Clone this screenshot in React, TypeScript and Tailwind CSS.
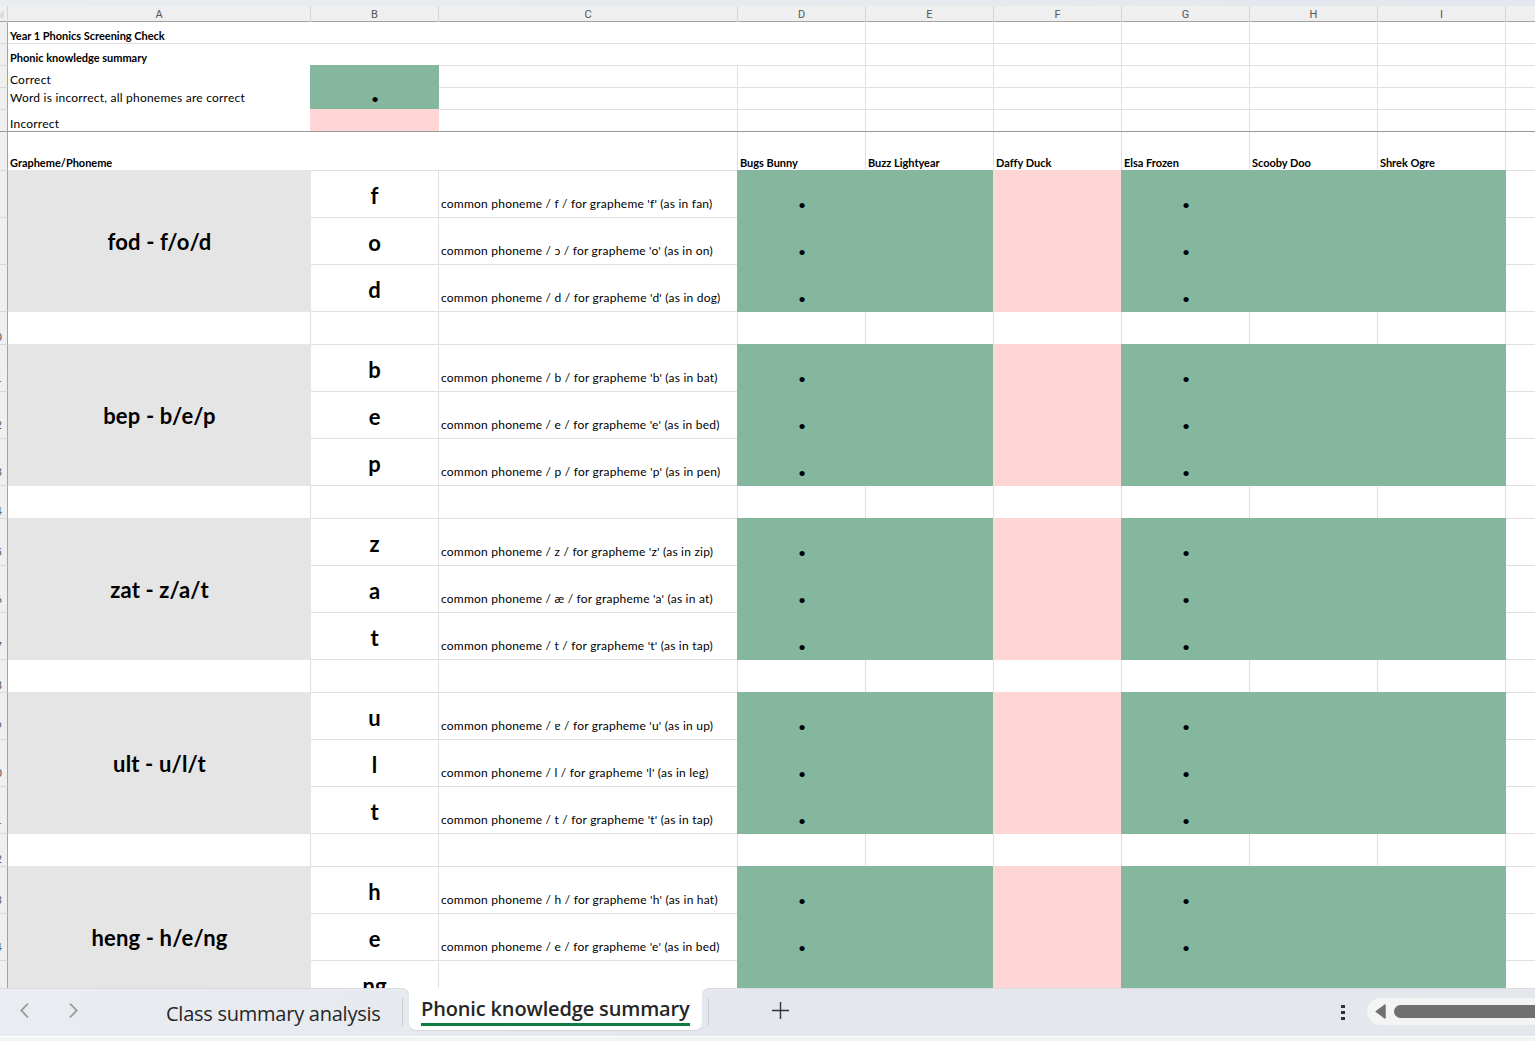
import clsx from 'clsx'
import type { ReactNode } from 'react'

type Mark = 'ok' | 'dot' | 'no'

interface Phoneme {
  row: string
  grapheme: string
  text: string
}

interface Word {
  label: string
  gapRow: string
  phonemes: Phoneme[]
}

const COLS = 'grid grid-cols-[8px_303px_128px_299px_repeat(6,128px)_29px]'

const LETTERS = ['A', 'B', 'C', 'D', 'E', 'F', 'G', 'H', 'I', '']

const PUPILS: { name: string; mark: Mark }[] = [
  { name: 'Bugs Bunny', mark: 'dot' },
  { name: 'Buzz Lightyear', mark: 'ok' },
  { name: 'Daffy Duck', mark: 'no' },
  { name: 'Elsa Frozen', mark: 'dot' },
  { name: 'Scooby Doo', mark: 'ok' },
  { name: 'Shrek Ogre', mark: 'ok' },
]

const WORDS: Word[] = [
  {
    label: 'fod - f/o/d',
    gapRow: '10',
    phonemes: [
      { row: '', grapheme: 'f', text: "common phoneme / f / for grapheme 'f' (as in fan)" },
      { row: '', grapheme: 'o', text: "common phoneme / ɔ / for grapheme 'o' (as in on)" },
      { row: '', grapheme: 'd', text: "common phoneme / d / for grapheme 'd' (as in dog)" },
    ],
  },
  {
    label: 'bep - b/e/p',
    gapRow: '14',
    phonemes: [
      { row: '11', grapheme: 'b', text: "common phoneme / b / for grapheme 'b' (as in bat)" },
      { row: '12', grapheme: 'e', text: "common phoneme / e / for grapheme 'e' (as in bed)" },
      { row: '13', grapheme: 'p', text: "common phoneme / p / for grapheme 'p' (as in pen)" },
    ],
  },
  {
    label: 'zat - z/a/t',
    gapRow: '18',
    phonemes: [
      { row: '15', grapheme: 'z', text: "common phoneme / z / for grapheme 'z' (as in zip)" },
      { row: '16', grapheme: 'a', text: "common phoneme / æ / for grapheme 'a' (as in at)" },
      { row: '17', grapheme: 't', text: "common phoneme / t / for grapheme 't' (as in tap)" },
    ],
  },
  {
    label: 'ult - u/l/t',
    gapRow: '22',
    phonemes: [
      { row: '19', grapheme: 'u', text: "common phoneme / ɐ / for grapheme 'u' (as in up)" },
      { row: '20', grapheme: 'l', text: "common phoneme / l / for grapheme 'l' (as in leg)" },
      { row: '21', grapheme: 't', text: "common phoneme / t / for grapheme 't' (as in tap)" },
    ],
  },
  {
    label: 'heng - h/e/ng',
    gapRow: '',
    phonemes: [
      { row: '23', grapheme: 'h', text: "common phoneme / h / for grapheme 'h' (as in hat)" },
      { row: '24', grapheme: 'e', text: "common phoneme / e / for grapheme 'e' (as in bed)" },
      { row: '', grapheme: 'ng', text: '' },
    ],
  },
]

function Cell({ className, children }: { className?: string; children?: ReactNode }) {
  return (
    <div className={clsx('min-w-0 border-r border-b border-[#e0e0e0] last:border-r-0', className)}>{children}</div>
  )
}

function Gutter({ n = '', className }: { n?: string; className?: string }) {
  return (
    <div
      className={clsx(
        'flex items-end justify-end overflow-hidden border-r border-r-[#a3a3a3] border-b border-b-[#d9d9d9] bg-[#efefef] pr-[5px] text-[11px] leading-[14px] text-[#555]',
        className,
      )}
    >
      {n}
    </div>
  )
}

function Small({ children }: { children: ReactNode }) {
  return <span className="text-[12px] leading-[16px] tracking-[0.22px] whitespace-nowrap">{children}</span>
}

function Bold({ children }: { children: ReactNode }) {
  return <span className="text-[11px] leading-[14px] font-bold tracking-[-0.02px] whitespace-nowrap">{children}</span>
}

function Dot() {
  return <span className="text-[14px] leading-[14px]">•</span>
}

// Fills cover the grid line above and to the left of the cell
function MarkCell({ mark }: { mark: Mark }) {
  return (
    <div
      className={clsx(
        '-mt-px -ml-px flex items-end justify-center pb-[6px] pl-px',
        mark === 'no' ? 'bg-[#ffd6d6]' : 'bg-[#84b79e]',
      )}
    >
      {mark === 'dot' && <Dot />}
    </div>
  )
}

function EmptyCells({ count }: { count: number }) {
  return (
    <>
      {Array.from({ length: count }, (_, i) => (
        <Cell key={i} />
      ))}
    </>
  )
}

function ColumnHeader() {
  return (
    <div className={clsx(COLS, 'h-4 border-b border-[#a3a3a3] bg-[#efefef]')}>
      <div className="flex items-center border-r border-[#d4d4d4]">
        <svg width="4" height="8" viewBox="0 0 4 8">
          <path d="M4 0V8H0V4Z" fill="#dcdcdc" />
        </svg>
      </div>
      {LETTERS.map((l, i) => (
        <div
          key={i}
          className="flex justify-center border-r border-[#d4d4d4] pt-px font-['Roboto',sans-serif] text-[11px] leading-[15px] text-[#555] last:border-r-0"
        >
          {l}
        </div>
      ))}
    </div>
  )
}

function TopRows() {
  return (
    <>
      <div className={clsx(COLS, 'h-[22px]')}>
        <Gutter />
        <Cell className="col-span-4 flex items-end pl-[2px]">
          <Bold>Year 1 Phonics Screening Check</Bold>
        </Cell>
        <EmptyCells count={6} />
      </div>
      <div className={clsx(COLS, 'h-[22px]')}>
        <Gutter />
        <Cell className="flex items-end border-r-transparent border-b-transparent pl-[2px]">
          <Bold>Phonic knowledge summary</Bold>
        </Cell>
        <Cell className="col-span-3" />
        <EmptyCells count={6} />
      </div>
      <div className={clsx(COLS, 'h-[22px]')}>
        <Gutter />
        <div className="flex items-end pl-[2px]">
          <Small>Correct</Small>
        </div>
        <div className="-mt-px -ml-px bg-[#84b79e]" />
        <EmptyCells count={8} />
      </div>
      <div className={clsx(COLS, 'h-[22px]')}>
        <Gutter />
        <div className="flex items-start pl-[2px] pt-[2px]">
          <Small>Word is incorrect, all phonemes are correct</Small>
        </div>
        <div className="-mt-px -ml-px flex items-end justify-center bg-[#84b79e] pb-1 pl-px">
          <Dot />
        </div>
        <EmptyCells count={8} />
      </div>
      <div className={clsx(COLS, 'h-[22px] grid-rows-[21px] border-b border-[#999]')}>
        <Gutter className="border-b-0" />
        <div className="flex items-start pt-[6px] pl-[2px]">
          <Small>Incorrect</Small>
        </div>
        <div className="-mt-px -ml-px bg-[#ffd6d6]" />
        {Array.from({ length: 8 }, (_, i) => (
          <Cell key={i} className="border-b-0" />
        ))}
      </div>
      <div className={clsx(COLS, 'h-[39px]')}>
        <Gutter />
        <Cell className="col-span-3 flex items-end pl-[2px]">
          <Bold>Grapheme/Phoneme</Bold>
        </Cell>
        {PUPILS.map(p => (
          <Cell key={p.name} className="flex items-end pl-[2px]">
            <Bold>{p.name}</Bold>
          </Cell>
        ))}
        <Cell />
      </div>
    </>
  )
}

function PhonemeCells({ p }: { p: Phoneme }) {
  return (
    <>
      <Cell className="flex items-center justify-center pt-[4px] text-[22px] leading-[26px] font-bold">
        {p.grapheme}
      </Cell>
      <Cell className="flex items-end pb-[5px] pl-[2px]">
        <Small>{p.text}</Small>
      </Cell>
      {PUPILS.map(pupil => (
        <MarkCell key={pupil.name} mark={pupil.mark} />
      ))}
      <Cell />
    </>
  )
}

function WordBlock({ word }: { word: Word }) {
  return (
    <>
      <div className={clsx(COLS, 'grid-rows-[47px_47px_47px]')}>
        {word.phonemes.map((p, i) => (
          <div key={i} className="contents">
            <Gutter n={p.row} className="col-start-1 pb-[6px]" />
            {i === 0 && (
              <div className="row-span-3 -mt-px flex items-center justify-center bg-[#e5e5e5] pt-[2px] text-[22px] leading-[26px] font-bold tracking-[0.15px]">
                {word.label}
              </div>
            )}
            <PhonemeCells p={p} />
          </div>
        ))}
      </div>
      <div className={clsx(COLS, 'h-[33px]')}>
        <Gutter n={word.gapRow} />
        <EmptyCells count={10} />
      </div>
    </>
  )
}

function SheetTabs() {
  return (
    <div className="h-[53px] shrink-0 bg-[#f3f3f3] font-['Open_Sans',sans-serif] text-[#262626]">
      <div className="flex h-12 bg-linear-to-r from-[#e9edf1] via-[#e4e7ee] to-[#e4e7ec]">
        <div className="relative flex w-[409px] border-t border-[#dcdcdc]">
          <div className="flex w-[166px] gap-10 pt-[14px] pl-5 text-[#999]">
            <svg width="9" height="15" viewBox="0 0 9 15" fill="none" stroke="currentColor" strokeWidth="1.8">
              <path d="M8 0.7L1.2 7.5L8 14.3" />
            </svg>
            <svg width="9" height="15" viewBox="0 0 9 15" fill="none" stroke="currentColor" strokeWidth="1.8">
              <path d="M1 0.7L7.8 7.5L1 14.3" />
            </svg>
          </div>
          <span className="w-[236px] pt-[11px] text-[20px] leading-[28px] tracking-[-0.25px] whitespace-nowrap">
            Class summary analysis
          </span>
          <div className="mt-[9px] h-7 w-px bg-[#cfcfcf]" />
          <div className="absolute -top-px right-0 size-[7px] bg-white">
            <div className="size-full rounded-tr-[7px] border-t border-r border-[#dcdcdc] bg-[#e6eaef]" />
          </div>
        </div>
        <div className="flex h-[42px] w-[293px] justify-center rounded-b-[7px] bg-white shadow-[0_1px_1px_#d5d7db]">
          <span className="mt-[6px] h-8 w-[269px] border-b-3 border-[#107c41] pt-px text-[20px] leading-[28px] font-semibold tracking-[-0.15px] whitespace-nowrap">
            Phonic knowledge summary
          </span>
        </div>
        <div className="relative flex flex-1 border-t border-[#dcdcdc]">
          <div className="absolute -top-px left-0 size-[7px] bg-white">
            <div className="size-full rounded-tl-[7px] border-t border-l border-[#dcdcdc] bg-[#e4e7ee]" />
          </div>
          <div className="mt-[9px] ml-[6px] h-7 w-px bg-[#cfcfcf]" />
          <svg className="mt-[13px] ml-[63px]" width="17" height="17" viewBox="0 0 17 17" stroke="#333" strokeWidth="1.4">
            <path d="M8.5 0V17M0 8.5H17" />
          </svg>
          <div className="mt-4 ml-auto flex w-1 flex-col gap-[3px]">
            <i className="h-[3px] bg-[#333]" />
            <i className="h-[3px] bg-[#333]" />
            <i className="h-[3px] bg-[#333]" />
          </div>
          <div className="mt-[9px] ml-[22px] flex h-[27px] w-[168px] items-center rounded-l-full bg-[#f4f4f4] pl-2">
            <svg width="11" height="15" viewBox="0 0 11 15">
              <path d="M10 1V14L1.2 7.5Z" fill="#707070" stroke="#707070" strokeWidth="1.5" strokeLinejoin="round" />
            </svg>
            <div className="ml-2 h-[13px] flex-1 rounded-l-full bg-[#707070]" />
          </div>
        </div>
      </div>
      <div className="h-px bg-white" />
    </div>
  )
}

export default function App() {
  return (
    <div className="flex h-[1041px] w-[1535px] flex-col overflow-hidden bg-white font-['Lato',sans-serif] text-black">
      <div className="h-[6px] shrink-0 bg-linear-to-r from-[#e8edf1] to-[#e4e8ee]" />
      <div className="min-h-0 flex-1 overflow-hidden">
        <ColumnHeader />
        <TopRows />
        {WORDS.map(w => (
          <WordBlock key={w.label} word={w} />
        ))}
      </div>
      <SheetTabs />
    </div>
  )
}
